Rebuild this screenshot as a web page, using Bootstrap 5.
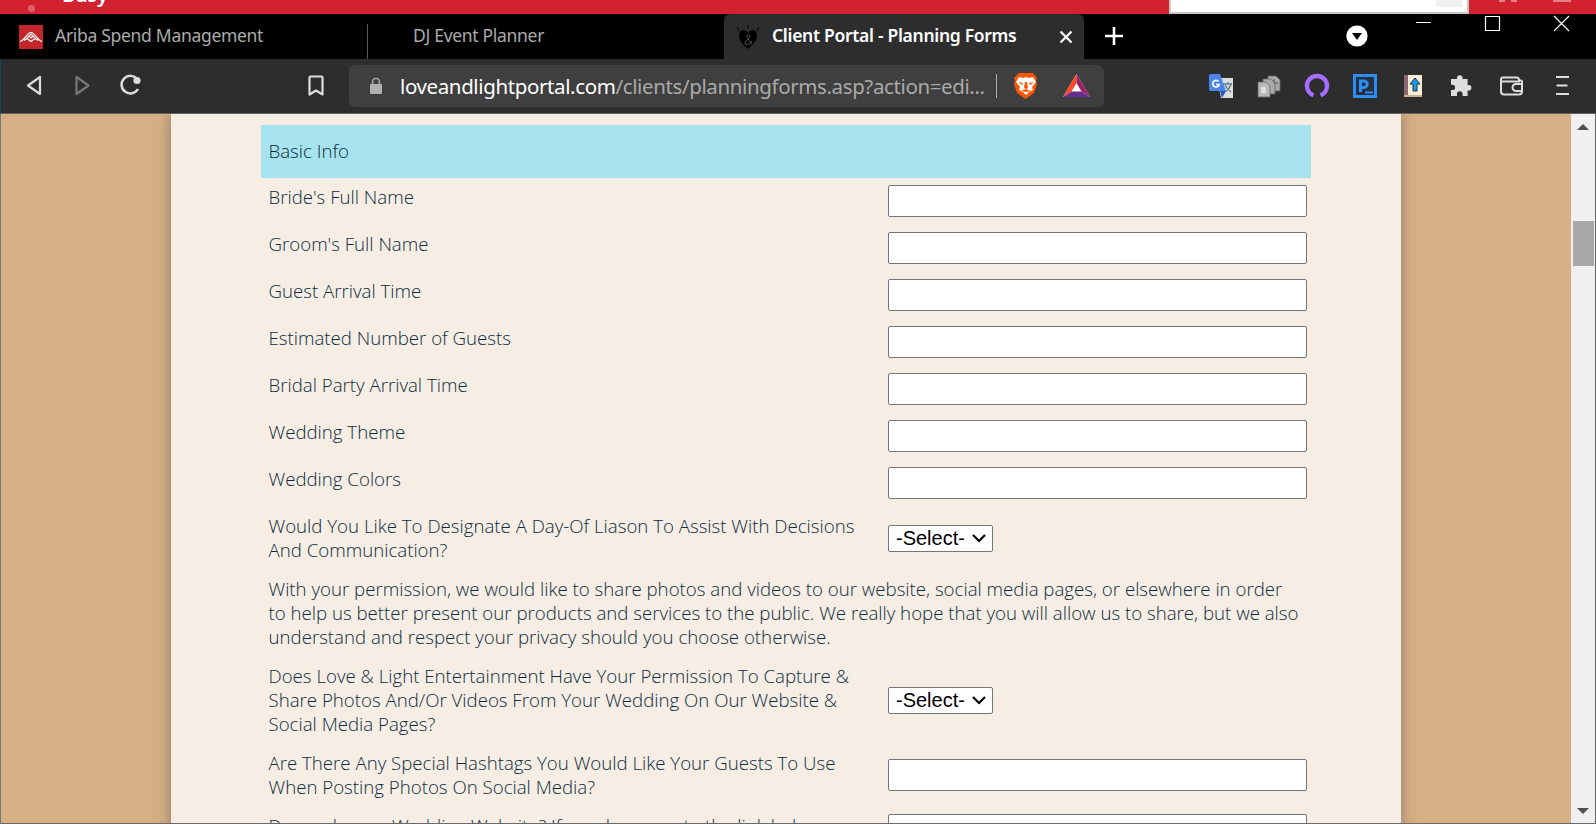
<!DOCTYPE html>
<html lang="en">
<head>
<meta charset="utf-8">
<title>Client Portal - Planning Forms</title>
<link href="https://cdn.jsdelivr.net/npm/bootstrap@5.3.0/dist/css/bootstrap.min.css" rel="stylesheet">
<style>
html,body{height:824px;overflow:hidden}
body{font-family:"Open Sans",sans-serif;background:#000;color:#0c2c3d}
svg{display:block;flex:none}
.app-strip{height:14px;background:#d2212f;color:#fff;padding-left:28px;font:600 20px/20px "Noto Sans",sans-serif}
.busy-word{margin-left:27px;margin-top:-15px;letter-spacing:-.3px}
.strip-dot{width:7px;height:7px;border-radius:50%;background:#e2606b;margin-top:5px}
.strip-search{width:300px;height:14px;background:#fff;border:solid #c8c8c8;border-width:0 2px 2px;margin-left:auto;padding-right:5px}
.strip-search i{width:26px;height:7px;background:#f0f0f0}
.strip-icons{width:127px;padding-left:30px;gap:6px}
.strip-icons i{width:6px;height:2px;background:#e58088}
.strip-icons i:last-child{width:18px;margin-left:30px}
.tabs{height:45px;background:#000;font-family:"Noto Sans",sans-serif;font-size:17.5px;letter-spacing:-.3px;color:#aaa;line-height:43px;white-space:nowrap}
.tab-one{width:367px;padding-left:19px;position:relative}
.tab-one::after{content:"";position:absolute;right:-1px;top:10px;bottom:0;width:1px;background:#585858}
.tab-one span,.tab-active span{margin-left:12px;margin-top:-2px}
.tab-two{width:357px;padding-left:46px}
.tab-active{width:360px;background:#2d2d2d;color:#fff;font-weight:600;border-radius:6px 6px 0 0;padding-left:12px;padding-right:11px}
.win-tools{width:512px}
.toolbar-row{height:55px;background:#2d2d2d;border-bottom:1px solid #616161;border-left:1px solid #18435a}
.address{width:755px;height:42px;border-radius:6px;background:#3f3f3f;color:#aaa;font:20.5px/42px "Noto Sans",sans-serif;letter-spacing:-.38px;padding-left:20px;padding-right:13px;white-space:nowrap}
.address span{margin-left:17px}
.address b{font-weight:400;color:#fff}
.view{height:710px;background:#d7af84;border-left:1px solid #777;border-right:1px solid #666;border-bottom:1px solid #6b6b6b;overflow:hidden}
.sheet{width:1230px;margin-left:170px;padding:11px 90px 0;background:#f6eee4;box-shadow:0 0 13px rgba(80,90,90,.6);font-weight:300;font-size:14pt;line-height:24px;height:760px}
.section-title{height:53px;background:#a7e2ef;padding:14px 8px 0 7.5px}
.field{padding:7px 4px 8px 7.5px}
.field-label{width:619.5px;white-space:nowrap}
.field input{display:block;width:419px;height:32px;border:1px solid #767676;border-radius:2px;background:#fff;padding:0}
.pick{width:105px;height:27px;border:1px solid #767676;border-radius:2px;background:#fff;color:#000;font:400 20px/25px "Liberation Sans",sans-serif;padding-left:7px;padding-right:6px}
.scroller{width:24px;height:709px;background:#f0f0f0;padding:10px 0 9px;position:relative}
.thumb{position:absolute;top:107px;left:2px;width:21px;height:45px;background:#a8a8a8}
</style>
</head>
<body>
<div class="app-strip d-flex overflow-hidden">
  <span class="strip-dot"></span><span class="busy-word">Busy</span>
  <div class="strip-search d-flex justify-content-end"><i></i></div>
  <div class="strip-icons d-flex"><i></i><i></i><i></i></div>
</div>
<div class="tabs d-flex">
  <div class="tab-one d-flex align-items-center">
    <svg width="24" height="24" viewBox="0 0 24 24"><path fill="#c4272b" d="M0 0h24v24H0z"/><path d="M1 16.500C6 15 8 7.500 12 7.500s6 7.500 11 9M5 15.500l3-2 4 3 4-3 3 2M8 13l4-4 4 4M10 11l2 2 2-2" fill="none" stroke="#fff" stroke-width="1.200"/></svg>
    <span>Ariba Spend Management</span>
  </div>
  <div class="tab-two"><span>DJ Event Planner</span></div>
  <div class="tab-active d-flex align-items-center">
    <svg width="24" height="26" viewBox="0 0 24 26"><path d="M12 25C8 21 3 18 3 11c0-6 7-6 9-2 2-4 9-4 9 2 0 7-5 10-9 14z" fill="#000"/><path d="M12 1v4M1 3l2 4M23 3l-2 4" stroke="#111" stroke-width="1.500"/><path d="M16 17c-3 5-8 4-7 1 1-2 5-3 5-5.500s-4-2-3 .5 3 4 5 7" fill="none" stroke="#555" stroke-width="1"/></svg>
    <span>Client Portal - Planning Forms</span>
    <svg class="ms-auto" width="14" height="14" viewBox="0 0 14 14"><path d="M1.500 1.500l11 11m0-11l-11 11" stroke="#fff" stroke-width="2.200"/></svg>
  </div>
  <div class="win-tools">
    <svg width="512" height="45" viewBox="1084 14 512 45"><path d="M1105 36h18M1114 27v18" stroke="#fff" stroke-width="2.600"/><circle cx="1357" cy="36" r="10.600" fill="#fff"/><path d="M1352 33h10l-5 7z"/><path d="M1416 22.500h15M1485.500 16.500h14v14h-14zM1554 16l15 15m0-15l-15 15" fill="none" stroke="#fff" stroke-width="1.200"/></svg>
  </div>
</div>
<div class="toolbar-row d-flex align-items-center">
  <svg width="348" height="54" viewBox="1 59 348 54" fill="none" stroke="#ddd" stroke-width="2.200" stroke-linejoin="round"><path d="M40 77v17L28 85.500z"/><path d="M76.500 77v17l12-8.500z" stroke="#777"/><path d="M137.500 79.500A8.800 8.800 0 1 0 138 89" stroke-width="2.500"/><circle cx="137" cy="80.500" r="3.600" fill="#ddd" stroke="none"/><path d="M309.500 77.500q0-1 1-1h11q1 0 1 1v17l-6.500-4-6.500 4z"/></svg>
  <div class="address d-flex align-items-center">
    <svg width="14" height="18" viewBox="0 0 14 18"><rect x="1" y="7" width="12" height="10" rx="1" fill="#b0b1b5"/><path d="M3.500 8V5a3.500 3.500 0 0 1 7 0v3" fill="none" stroke="#a8a8ab" stroke-width="1.600"/></svg>
    <span><b>loveandlightportal.com</b>/clients/planningforms.asp?action=edi...</span>
    <svg class="ms-auto" width="96" height="42" viewBox="995 65 96 42"><path d="M996.500 74v24" stroke="#aaa"/>
    <path d="M1019 73h14l4 5-1 3 1 3-3 9-8.500 6-8.500-6-3-9 1-3-1-3z" fill="#fb5405"/><path d="M1019 77l4 1 3-1 3 1 4-1 3 5-4 5 1 3-4 2-3 3-3-3-4-2 1-3-4-5z" fill="#fff"/><path d="M1018 82l5 1-1 2zM1034 82l-5 1 1 2zM1025 82l-1 6 2 1 2-1-1-6zM1021 91l5-2 5 2-5 1z" fill="#fb5405"/>
    <path d="M1076.500 74l-13.500 23h27z" fill="#fff"/><path d="M1076.500 74v9l-5 8.500L1063 97z" fill="#ff4724"/><path d="M1076.500 74v9l5 8.500L1090 97z" fill="#9e1f63"/><path d="M1063 97l8.500-5.500h10L1090 97z" fill="#662d91"/></svg>
  </div>
  <svg width="491" height="54" viewBox="1104 59 491 54">
    <path d="M1217 78h16v20h-12z" fill="#ddd"/><path d="M1211 74h9l6 17h-15q-2 0-2-2V76q0-2 2-2z" fill="#4a86e8"/><path d="M1220 91h6l-4 7z" fill="#2355c4"/><path d="M1218.500 81.500a3.300 3.300 0 1 0 .7 3h-3.200" fill="none" stroke="#fff" stroke-width="1.700"/><path d="M1223 84h9m-4-2v2m3 0q-2 6-6 8m0-7q2 4 6 7" fill="none" stroke="#607d8b" stroke-width="1.300"/>
    <g stroke="#666" stroke-width=".8"><path d="M1268 76h8l4 4v11h-12z" fill="#aaa"/><path d="M1263 79h8l4 4v11h-12z" fill="#aaa"/><path d="M1258 82h8l4 4v11h-12z" fill="#b8b8b8"/></g><path d="M1261 87h5v6h-5z" fill="#ddd"/><path d="M1274 79v4h4" fill="none" stroke="#555"/>
    <path d="M1313.500 95.300a10 10 0 1 1 7 0" fill="none" stroke="#a66cff" stroke-width="4.400"/>
    <path d="M1354.500 75.500h21v21h-21z" fill="#27303c" stroke="#2b8ef6" stroke-width="3"/><path d="M1360.500 92V81h3.500a3.200 3.200 0 0 1 0 6.400h-3.500" fill="none" stroke="#2b8ef6" stroke-width="3"/><path d="M1365 92.500h8" stroke="#2b8ef6" stroke-width="2"/>
    <path d="M1404 75h18v22h-18z" fill="#f9ecd6"/><path d="M1404 75h4v20h-4z" fill="#8d6672"/><path d="M1404 95h18v2h-18z" fill="#c8b28d"/><path d="M1415 78l5 6h-3v7h-4v-7h-3z" fill="#1698ee" stroke="#17344b"/>
    <path d="M1451 79h6v-1a2.800 2.800 0 0 1 5.600 0v1h5v6h1a2.800 2.800 0 0 1 0 5.600h-1V96h-5v-2a2.800 2.800 0 0 0-5.600 0v2h-6v-6h1.500a2.600 2.600 0 0 0 0-5.200H1451z" fill="#ddd"/>
    <g fill="none" stroke="#ddd" stroke-width="2"><path d="M1503 77.500h14q2 0 2 3h2q1 0 1 2v9q0 3-3 3h-15q-3 0-3-3v-12q0-2 2-2zm-1 4h18M1523 84h-7a3.500 3.500 0 0 0 0 7h7"/><path d="M1556 77h13M1556.500 85.500h11M1556 94h13"/></g>
  </svg>
</div>
<div class="view d-flex">
  <div class="sheet">
    <div class="section-title">Basic Info</div>
    <div class="field d-flex align-items-center"><div class="field-label align-self-start">Bride's Full Name</div><input></div>
    <div class="field d-flex align-items-center"><div class="field-label align-self-start">Groom's Full Name</div><input></div>
    <div class="field d-flex align-items-center"><div class="field-label align-self-start">Guest Arrival Time</div><input></div>
    <div class="field d-flex align-items-center"><div class="field-label align-self-start">Estimated Number of Guests</div><input></div>
    <div class="field d-flex align-items-center"><div class="field-label align-self-start">Bridal Party Arrival Time</div><input></div>
    <div class="field d-flex align-items-center"><div class="field-label align-self-start">Wedding Theme</div><input></div>
    <div class="field d-flex align-items-center"><div class="field-label align-self-start">Wedding Colors</div><input></div>
    <div class="field d-flex align-items-center"><div class="field-label align-self-start">Would You Like To Designate A Day-Of Liason To Assist With Decisions<br>And Communication?</div><div class="pick d-flex align-items-center justify-content-between"><span>-Select-</span><svg width="14" height="9" viewBox="0 0 14 9"><path d="M1 1l6 6 6-6" fill="none" stroke="#000" stroke-width="2.200"/></svg></div></div>
    <div class="field"><div class="field-label">With your permission, we would like to share photos and videos to our website, social media pages, or elsewhere in order<br>to help us better present our products and services to the public. We really hope that you will allow us to share, but we also<br>understand and respect your privacy should you choose otherwise.</div></div>
    <div class="field d-flex align-items-center"><div class="field-label align-self-start">Does Love &amp; Light Entertainment Have Your Permission To Capture &amp;<br>Share Photos And/Or Videos From Your Wedding On Our Website &amp;<br>Social Media Pages?</div><div class="pick d-flex align-items-center justify-content-between"><span>-Select-</span><svg width="14" height="9" viewBox="0 0 14 9"><path d="M1 1l6 6 6-6" fill="none" stroke="#000" stroke-width="2.200"/></svg></div></div>
    <div class="field d-flex align-items-center"><div class="field-label align-self-start">Are There Any Special Hashtags You Would Like Your Guests To Use<br>When Posting Photos On Social Media?</div><input></div>
    <div class="field d-flex align-items-center"><div class="field-label align-self-start">Do you have a Wedding Website? If so, please paste the link below</div><input></div>
  </div>
  <div class="scroller d-flex flex-column justify-content-between align-items-center ms-auto">
    <svg width="12" height="6" viewBox="0 0 12 6"><path d="M0 6l6-6 6 6z" fill="#505050"/></svg>
    <div class="thumb"></div>
    <svg width="12" height="6" viewBox="0 0 12 6"><path d="M0 0h12L6 6z" fill="#505050"/></svg>
  </div>
</div>
<script src="https://cdn.jsdelivr.net/npm/bootstrap@5.3.0/dist/js/bootstrap.bundle.min.js"></script>
</body>
</html>
